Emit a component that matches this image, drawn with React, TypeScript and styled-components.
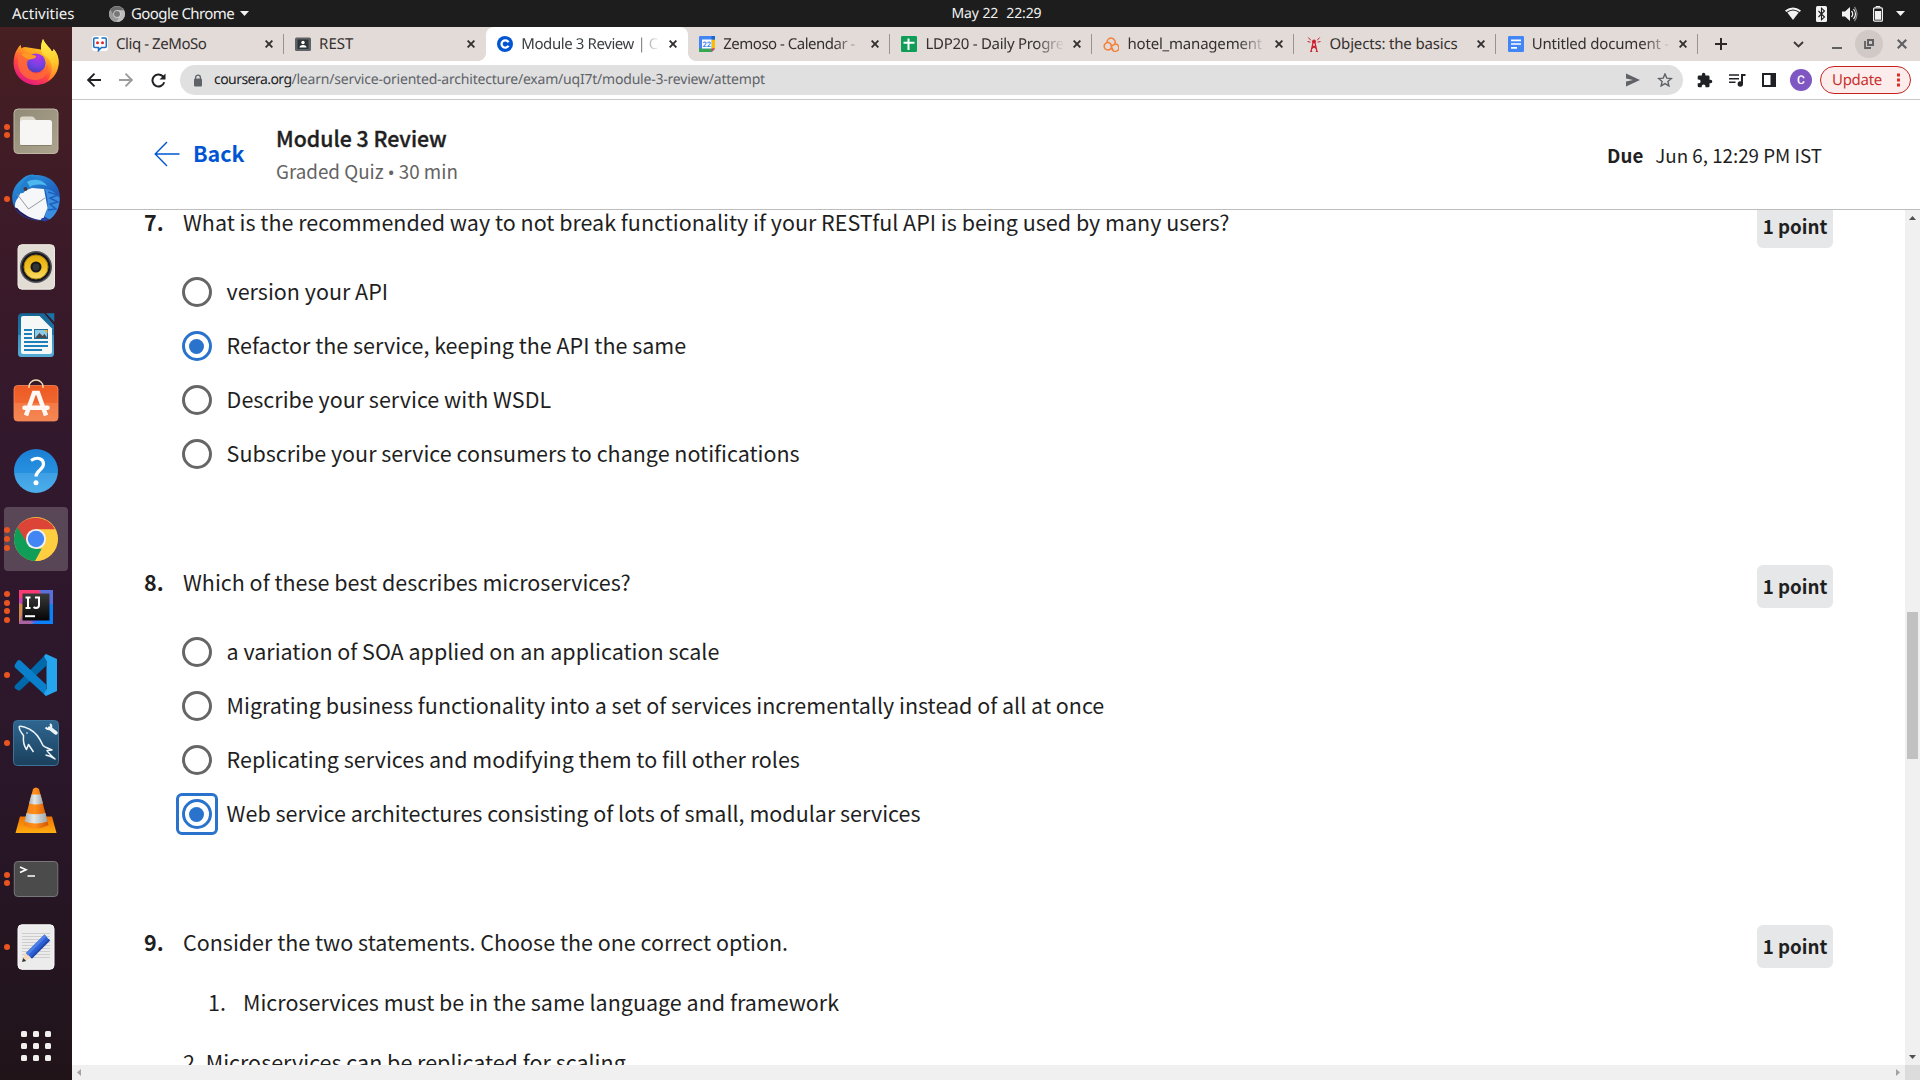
import React from "react";
import styled, { createGlobalStyle, css } from "styled-components";

const uiFont = `"Noto Sans", sans-serif`;
const pageFont = `"Source Sans Pro", "Noto Sans CJK SC", sans-serif`;

const GlobalStyle = createGlobalStyle`
  *, *::before, *::after { box-sizing: border-box; }
  html, body { margin: 0; padding: 0; background: #fff; overflow: hidden; }
  svg { display: block; flex: none; }
`;

const Desktop = styled.div`
  width: 1920px;
  height: 1080px;
  display: flex;
  flex-direction: column;
  overflow: hidden;
  font-family: ${uiFont};
`;

/* ---------- GNOME panel ---------- */

const Panel = styled.header`
  height: 27px;
  flex: none;
  display: grid;
  grid-template-columns: 1fr auto 1fr;
  align-items: center;
  background: #1d1d1d;
  color: #f2f2f2;
  font-size: 15px;
  line-height: 26px;
  white-space: pre;
  text-rendering: geometricPrecision;
`;

const PanelLeft = styled.div`
  display: flex;
  align-items: center;
  padding-left: 12px;
`;

const Activities = styled.span`
  width: 97px;
`;

const AppMenu = styled.span`
  display: flex;
  align-items: center;
  gap: 6px;
  letter-spacing: -0.58px;
`;

const Clock = styled.div`
  display: flex;
  gap: 8px;
  font-size: 14px;
  letter-spacing: -0.1px;
  padding-right: 6px;
  padding-left: 83px;
  margin-left: -4px;
`;

const PanelRight = styled.div`
  display: flex;
  align-items: center;
  justify-content: flex-end;
  gap: 15px;
  padding-right: 15px;
`;

const MenuCaret = styled.span`
  margin-left: -2px;
`;

/* ---------- Dock ---------- */

const Workspace = styled.div`
  flex: 1;
  min-height: 0;
  display: flex;
`;

const Dock = styled.nav`
  width: 72px;
  flex: none;
  display: flex;
  flex-direction: column;
  gap: 4px;
  padding: 4px;
  background: linear-gradient(180deg, #471f22 0%, #3c1a28 20%, #31182d 42%, #2c172b 65%, #261524 82%, #201419 100%);
`;

const DockItem = styled.div<{ $active?: boolean }>`
  position: relative;
  width: 64px;
  height: 64px;
  border-radius: 4px;
  background: ${(p) => (p.$active ? "rgba(255,255,255,0.2)" : "transparent")};
`;

const Dots = styled.div`
  position: absolute;
  left: 0;
  top: 0;
  height: 64px;
  width: 6px;
  display: flex;
  flex-direction: column;
  justify-content: center;
  gap: 2.7px;
`;

const Dot = styled.i`
  width: 6px;
  height: 6px;
  border-radius: 50%;
  background: #e95420;
`;

const AppGrid = styled.div`
  margin-top: auto;
  margin-bottom: 15px;
  align-self: center;
  display: grid;
  grid-template-columns: repeat(3, 6px);
  grid-auto-rows: 6px;
  gap: 6px;
`;

const GridDot = styled.i`
  border-radius: 1.5px;
  background: #f1f0ef;
`;

/* ---------- Browser ---------- */

const Browser = styled.main`
  flex: 1;
  min-width: 0;
  display: flex;
  flex-direction: column;
  background: #fff;
`;

const TabStrip = styled.div`
  height: 34px;
  flex: none;
  display: flex;
  align-items: center;
  background: #e3dbd8;
  padding-left: 10px;
  text-rendering: geometricPrecision;
`;

const Tab = styled.div<{ $active?: boolean; $line?: boolean }>`
  position: relative;
  width: 202.1px;
  height: 34px;
  flex: none;
  display: flex;
  align-items: center;
  padding-left: 11px;
  color: #33302f;
  &:first-child { padding-left: 10px; }
  ${(p) =>
    p.$line &&
    css`
      &::after {
        content: "";
        position: absolute;
        right: 0.6px;
        top: 7px;
        width: 1px;
        height: 20px;
        background: #99928f;
      }
    `}
  ${(p) =>
    p.$active &&
    css`
      color: #3c4043;
      &::before {
        content: "";
        position: absolute;
        inset: 0 0 0 0;
        border-radius: 8px 8px 0 0;
        background: #fff;
      }
    `}
`;

const TabFoot = styled.i<{ $side: "left" | "right" }>`
  position: absolute;
  bottom: 0;
  ${(p) => p.$side}: -8px;
  width: 8px;
  height: 8px;
  background: radial-gradient(circle at ${(p) => (p.$side === "left" ? "0 0" : "100% 0")}, transparent 7.6px, #fff 8.2px);
`;

const TabTitle = styled.span<{ $ls: number; $fade?: boolean }>`
  position: relative;
  width: 142px;
  margin-left: 8px;
  overflow: hidden;
  white-space: nowrap;
  font-size: 15px;
  line-height: 22px;
  letter-spacing: ${(p) => p.$ls}px;
  ${(p) => p.$fade && css`mask-image: linear-gradient(90deg, #000 78%, transparent 98%);`}
`;

const TabIcon = styled.span`
  position: relative;
  width: 16px;
  height: 16px;
`;

const TabClose = styled.span`
  position: relative;
  margin-left: auto;
  margin-right: 11.6px;
`;

const StripControls = styled.div`
  flex: 1;
  display: flex;
  align-items: center;
`;

const ControlSlot = styled.span<{ $w: number; $ml?: number }>`
  width: ${(p) => p.$w}px;
  height: 28px;
  margin-left: ${(p) => p.$ml ?? 0}px;
  display: flex;
  align-items: center;
  justify-content: center;
`;

const RestoreSlot = styled(ControlSlot)`
  border-radius: 50%;
  background: #d1c9c6;
`;

const Toolbar = styled.div`
  height: 39px;
  flex: none;
  display: flex;
  align-items: center;
  border-bottom: 1px solid #c9c9c9;
  padding: 0 8px 0 15px;
  text-rendering: geometricPrecision;
`;

const NavButtons = styled.div`
  display: flex;
  gap: 18px;
  width: 93px;
`;

const Omnibox = styled.div`
  width: 1503px;
  height: 30px;
  display: flex;
  align-items: center;
  border-radius: 15px;
  background: #e0e0e0;
  padding: 0 10px 0 13px;
`;

const Url = styled.span`
  flex: 1;
  margin-left: 11px;
  font-size: 14px;
  line-height: 22px;
  white-space: nowrap;
  color: #5f6368;
  letter-spacing: -0.21px;
`;

const Host = styled.span`
  color: #202124;
  letter-spacing: -0.55px;
`;

const OmniIcons = styled.div`
  display: flex;
  gap: 16px;
`;

const ToolIcons = styled.div`
  display: flex;
  align-items: center;
  gap: 16px;
  margin-left: 14px;
`;

const Avatar = styled.span`
  width: 22px;
  height: 22px;
  margin-left: 14px;
  border-radius: 50%;
  background: #7e57c2;
  color: #fff;
  font: 500 12px/22px Roboto, sans-serif;
  text-align: center;
`;

const UpdateButton = styled.button`
  width: 91px;
  height: 28px;
  margin: 0 0 0 8px;
  padding: 0 10px 0 11px;
  display: flex;
  align-items: center;
  justify-content: space-between;
  border: 1px solid #c5221f;
  border-radius: 14px;
  background: #fcedec;
  color: #c9302c;
  font-family: ${uiFont};
  font-size: 15px;
  letter-spacing: -0.3px;
  text-rendering: geometricPrecision;
`;

const QuizHeader = styled.section`
  height: 110px;
  flex: none;
  display: flex;
  align-items: center;
  border-bottom: 1px solid #bdbdbd;
  padding: 0 98px 0 82px;
  font-family: ${pageFont};
  color: #1f1f1f;
`;

const BackLink = styled.a`
  width: 122px;
  display: flex;
  align-items: center;
  gap: 13px;
  padding-bottom: 2px;
  color: #0056d2;
  font-size: 21.48px;
  line-height: 30px;
  font-weight: 700;
`;

const BackText = styled.span`
  padding-bottom: 1px;
`;

const QuizTitles = styled.div`
  flex: 1;
  padding-bottom: 1px;
`;

const QuizTitle = styled.h1`
  margin: 0;
  font-size: 21.3px;
  line-height: 33px;
  font-weight: 500;
  -webkit-text-stroke: 0.35px #1f1f1f;
`;

const QuizMeta = styled.p`
  margin: 0;
  font-size: 18.8px;
  line-height: 33px;
  color: #636363;
`;

const Bullet = styled.span`
  font-family: "Noto Sans", sans-serif;
  font-size: 18px;
  line-height: 1;
`;

const DueDate = styled.div`
  display: flex;
  gap: 12px;
  font-size: 18.75px;
  line-height: 32px;
  padding-top: 1px;
`;

const Viewport = styled.section`
  flex: 1;
  min-height: 0;
  display: grid;
  grid-template-columns: 1fr 15px;
  grid-template-rows: 1fr 15px;
`;

const QuizScroll = styled.div`
  overflow: hidden;
  padding: 0 72px;
  font-family: ${pageFont};
  font-size: 21.49px;
  line-height: 34px;
  color: #1f1f1f;
`;

const Question = styled.article`
  height: 360px;
  display: flex;
  align-items: flex-start;
  &:first-child { margin-top: -5px; }
`;

const QuestionNumber = styled.b`
  width: 39px;
`;

const QuestionBody = styled.div`
  flex: 1;
`;

const Prompt = styled.div`
  margin-bottom: 26px;
`;

const Option = styled.label`
  height: 54px;
  display: flex;
  align-items: center;
`;

const OptionText = styled.span`
  padding-bottom: 2px;
`;

const Radio = styled.span<{ $checked?: boolean; $focus?: boolean }>`
  width: 30px;
  height: 30px;
  margin: 0 15px 0 -1.4px;
  display: grid;
  place-items: center;
  border-radius: 50%;
  border: 3px solid ${(p) => (p.$checked ? "#2a73cc" : "#666")};
  position: relative;
  ${(p) =>
    p.$checked &&
    css`
      &::before {
        content: "";
        width: 15px;
        height: 15px;
        border-radius: 50%;
        background: #2a73cc;
      }
    `}
  ${(p) =>
    p.$focus &&
    css`
      &::after {
        content: "";
        position: absolute;
        inset: -9px;
        border: 3px solid #2a73cc;
        border-radius: 6px;
      }
    `}
`;

const Points = styled.span`
  width: 76px;
  height: 43px;
  border-radius: 6px;
  background: #e5e7e8;
  font-size: 18.75px;
  font-weight: 700;
  line-height: 42px;
  text-align: center;
`;

const Statements = styled.ol`
  margin: 0;
  padding-left: 25px;
  list-style: none;
`;

const Statement = styled.li`
  display: flex;
`;

const StatementMark = styled.span`
  width: 35px;
`;

const StatementText = styled.p`
  margin: 26px 0 0;
`;

const VScroll = styled.div`
  display: flex;
  flex-direction: column;
  align-items: center;
  justify-content: space-between;
  background: #f0f0f0;
  padding: 6px 0;
`;

const Thumb = styled.div`
  width: 11px;
  height: 147px;
  margin-top: 96px;
  background: #c1c1c1;
`;

const HScroll = styled.div`
  display: flex;
  align-items: center;
  justify-content: space-between;
  padding: 0 5px;
  background: #f0f0f0;
`;

const Corner = styled.div`
  background: #dcdcdc;
`;

/* ---------- Dock icons (64 x 64 grid) ---------- */

const Icon64 = ({ children }: { children: React.ReactNode }) => (
  <svg width="64" height="64" viewBox="0 0 64 64">{children}</svg>
);

const Firefox = () => (
  <Icon64>
    <defs>
      <linearGradient id="ffBody" x1="0.8" y1="0.1" x2="0.3" y2="1">
        <stop offset="0" stopColor="#ffe62e" /><stop offset="0.35" stopColor="#ffa51f" />
        <stop offset="0.65" stopColor="#ff4a3c" /><stop offset="1" stopColor="#e31587" />
      </linearGradient>
      <linearGradient id="ffTail" x1="0.5" y1="0" x2="0.5" y2="1">
        <stop offset="0" stopColor="#fff44f" /><stop offset="0.55" stopColor="#ffc82c" /><stop offset="1" stopColor="#ff7a2a" />
      </linearGradient>
      <radialGradient id="ffGlobe" cx="0.6" cy="0.2" r="0.9">
        <stop offset="0" stopColor="#b833e1" /><stop offset="0.5" stopColor="#7542e5" /><stop offset="1" stopColor="#4a3bb5" />
      </radialGradient>
    </defs>
    <path d="M14 17c.6-1.300 1.600-2.400 3-3.200-.2 1.500 0 2.500.5 3.600 1-.8 2-1.200 3.500-1.400L37 18.500C36.800 14 38 10.500 39 8c2 5 6.500 8 9 12.500 1.300-.5 1.500-1.500 1.500-2.500C53.500 22 55 27 54.600 32.500 54 45 44 54 32 54S9.600 44.500 9.600 32c0-6 1.400-11 4.400-15z" fill="url(#ffBody)" />
    <path d="M39 8c2 5 6.500 8 9 12.500 1.300-.5 1.500-1.500 1.500-2.500C53 22 55 27 54.500 33c-.6 8-5.500 14-11 17 3-5 5.500-12 3.500-18-2-6.500-10.500-6.500-10-15 .1-3.700 1.100-6.700 2-9z" fill="url(#ffTail)" />
    <circle cx="32" cy="32" r="9.600" fill="url(#ffGlobe)" />
    <path d="M14 24c3-2 6.500-2.600 9.500-1.600 2 1.200 5 1.400 8.500 2.600.3 2.200-3 3-6.500 3.600-1.800.6-2.300 2.400-2.300 4.400 0 5 4 9.500 9.500 9.500 6 0 10-4 10.400-9.500C46 41 41 48.500 32 49c-9.500.3-16-6-17.500-13-.8-4-.9-8-.5-12z" fill="#ff6a3a" opacity="0.8" />
    <path d="M17 23.500c3-2 5-1.800 7-1 2 1.200 5 1.400 8 2.500.3 2.200-4 3-7 3.600-2-.4-5-2.500-8-5.100z" fill="#ff9a22" />
  </Icon64>
);

const Files = () => (
  <Icon64>
    <defs><linearGradient id="fileBg" x1="0" y1="0" x2="1" y2="1"><stop offset="0" stopColor="#918a76" /><stop offset="1" stopColor="#aca48e" /></linearGradient></defs>
    <rect x="10" y="10" width="44" height="44.500" rx="4" fill="url(#fileBg)" stroke="#bcb6a4" />
    <path d="M16 20a2.500 2.500 0 0 1 2.500-2.500H28q1.500 0 2.500 1.500l1.500 2v6H16z" fill="#dcd8cb" />
    <rect x="16" y="21" width="32" height="25.500" rx="2.500" fill="#f7f6f4" />
    <path d="M17 46.500h30" stroke="#857e6b" strokeWidth="1" />
  </Icon64>
);

const Thunderbird = () => (
  <Icon64>
    <defs><linearGradient id="tb" x1="0.2" y1="0" x2="0.8" y2="1"><stop offset="0" stopColor="#2a97dc" /><stop offset="0.5" stopColor="#2067c4" /><stop offset="1" stopColor="#273a9a" /></linearGradient></defs>
    <path d="M17 13c3-3.500 7-5 11-5.400 1.500-.4 2-.2 2 .4C45 7 56 17 56 31c0 12-6 20-15 23.500l-3.500-1C20 54 8.500 44 8.200 31c0-7 3-13.500 8.800-18z" fill="url(#tb)" />
    <path d="M41 22c6 0 11 4 14.500 9 0 10-3.500 17-10 21.500l-5-3c4-8 4-19 .5-27.500z" fill="#3a8fe0" />
    <path d="M44 25l10 3-8 3 8 4-8 2 6 5-8 1" fill="none" stroke="#1f60bd" strokeWidth="1.500" />
    <path d="M17 25l11-4 12 1 3.500 19-4 10c-10 1.500-21-3-28.500-10-.5-5 1-8 3-10z" fill="#f5f7f9" />
    <path d="M13 27l11.500 15L41 31" fill="none" stroke="#8b9096" strokeWidth="0.900" />
    <path d="M10 40c8 3 20 8 29 11.500-9 3-22-.5-29-11.500z" fill="#251a5e" />
    <path d="M13.500 38c6 6 15 9 26 11l-3 4c-8-1-17-5-22.500-11z" fill="#f5f7f9" />
    <path d="M16 26c0-7 3-13 10-17 6 0 10 4 11 9-7-1-12 1-16 6-1 2-3 2.500-5 2z" fill="#237fcd" />
    <path d="M23 15c6-4 16-3 20 4-6-2-13-2-17 1z" fill="#4db8ee" />
    <circle cx="21.500" cy="22" r="2" fill="#48363b" />
  </Icon64>
);

const Rhythmbox = () => (
  <Icon64>
    <defs><linearGradient id="rb" x1="0" y1="0" x2="0" y2="1"><stop offset="0" stopColor="#e3ab0c" /><stop offset="0.500" stopColor="#f0c020" /><stop offset="1" stopColor="#f9dc6c" /></linearGradient></defs>
    <rect x="14" y="9.700" width="36.500" height="44.500" rx="4" fill="#e2ddd4" stroke="#efebe4" />
    <circle cx="32" cy="32" r="16" fill="#54535a" />
    <circle cx="32" cy="32" r="14.500" fill="#17181f" />
    <circle cx="32" cy="32" r="12" fill="url(#rb)" stroke="#aa8410" />
    <circle cx="32" cy="32" r="5.500" fill="#16171b" />
    <circle cx="32" cy="32" r="3.500" fill="#333434" />
  </Icon64>
);

const Writer = () => (
  <Icon64>
    <defs><linearGradient id="lo" x1="0" y1="0" x2="0" y2="1"><stop offset="0" stopColor="#166795" /><stop offset="0.500" stopColor="#1a78ad" /><stop offset="0.501" stopColor="#3792c2" /><stop offset="1" stopColor="#55acd6" /></linearGradient></defs>
    <path d="M18 10.300h22L50 22v28.500a3.500 3.500 0 0 1-3.500 3.500h-29a3.500 3.500 0 0 1-3.500-3.500v-36.500a3.700 3.700 0 0 1 4-3.700z" fill="url(#lo)" />
    <path d="M42 10.300h8.300v8.700z" fill="#1674a8" />
    <path d="M19 13h16.500L48 25.500V48.500a2.500 2.500 0 0 1-2.500 2.500h-26.500a2 2 0 0 1-2-2V15a2 2 0 0 1 2-2z" fill="#f6f8f8" />
    <path d="M20 27h8M20 31h8M20 35h8M20 39h24M20 43h24M20 47h18" stroke="#1d80b9" strokeWidth="1.800" />
    <rect x="30.500" y="26.500" width="13" height="9" fill="#8ec9e8" stroke="#1e6d98" />
    <path d="M31 35l4.500-5 3 3 2-2 3 4z" fill="#47494b" /><path d="M40 27h3.500v3.500z" fill="#f0b52f" />
  </Icon64>
);

const Software = () => (
  <Icon64>
    <defs><linearGradient id="sw" x1="0" y1="0" x2="0" y2="1"><stop offset="0" stopColor="#ee5922" /><stop offset="0.480" stopColor="#f0662f" /><stop offset="0.490" stopColor="#f37a47" /><stop offset="1" stopColor="#f48752" /></linearGradient></defs>
    <rect x="10" y="14.500" width="44" height="35.500" rx="3.500" fill="url(#sw)" stroke="#f58b5b" strokeWidth="0.800" />
    <path d="M25 17v-1.500a7 6.500 0 0 1 14 0V17" fill="none" stroke="#f3dfb5" strokeWidth="1.400" />
    <path d="M22 44.500L30 22h4l8 22.500" fill="none" stroke="#fff8f4" strokeWidth="4.500" />
    <path d="M20.500 36.700h23" stroke="#fff8f4" strokeWidth="4.500" strokeLinecap="round" />
  </Icon64>
);

const Help = () => (
  <Icon64>
    <defs><linearGradient id="hp" x1="0" y1="0" x2="0" y2="1"><stop offset="0" stopColor="#1b7fd3" /><stop offset="0.540" stopColor="#2791e0" /><stop offset="0.550" stopColor="#3d9fe4" /><stop offset="1" stopColor="#4eaeea" /></linearGradient></defs>
    <circle cx="32" cy="32" r="22" fill="url(#hp)" />
    <path d="M27 21.500c7-4.500 12.500-1.500 12.500 3.500 0 6-7.500 6.500-7.500 12.500" fill="none" stroke="#fff" strokeWidth="3.200" />
    <circle cx="32" cy="43.800" r="2.500" fill="#fff" />
  </Icon64>
);

const ChromeLogo = ({ size, mono }: { size: number; mono?: boolean }) => (
  <svg width={size} height={size} viewBox="0 0 48 48">
    <circle cx="24" cy="24" r="24" fill={mono ? "#c8c8c8" : "#ffcd40"} />
    <path d="M3.200 12A24 24 0 0 1 44.800 13.500H24L14.900 29.200z" fill={mono ? "#6d6d6d" : "#db4437"} />
    <path d="M3.700 11.200L14.900 29.200 24 34.500h8.500L23 48A24 24 0 0 1 3.700 11.200z" fill={mono ? "#9a9a9a" : "#0f9d58"} />
    <path d="M24 13.500h21A24 24 0 0 1 23 48L33.100 29.200z" fill={mono ? "#bdbdbd" : "#ffcd40"} />
    <circle cx="24" cy="24" r="11" fill={mono ? "#d9d9d9" : "#f1f1f1"} />
    <circle cx="24" cy="24" r="8.900" fill={mono ? "#777" : "#4285f4"} />
  </svg>
);

const ChromeSlot = styled.span`
  width: 64px;
  height: 64px;
  display: grid;
  place-items: center;
`;

const Idea = () => (
  <Icon64>
    <defs>
      <linearGradient id="ijA" x1="0" y1="0" x2="1" y2="1"><stop offset="0" stopColor="#ff318c" /><stop offset="0.500" stopColor="#6b57ff" /><stop offset="1" stopColor="#087cfa" /></linearGradient>
      <linearGradient id="ijB" x1="0" y1="0" x2="0" y2="1"><stop offset="0" stopColor="#3a3a3a" /><stop offset="1" stopColor="#050505" /></linearGradient>
    </defs>
    <rect x="15" y="15" width="34" height="34" fill="url(#ijA)" />
    <path d="M15 15h20l5 8H15z" fill="#fb3b74" /><path d="M35 15h14v16l-9-8z" fill="#5b6fdc" />
    <path d="M15 28l5 2-3 16-2 2z" fill="#cd8a4b" /><path d="M15 48l3-8 14 9H15z" fill="#a964a0" />
    <path d="M45 28l4 2v19H27l10-4z" fill="#0c80fa" />
    <rect x="18.500" y="18.500" width="27" height="27" fill="url(#ijB)" />
    <path d="M21.500 22.600h5M21.500 33h5M24 22.600V33M31 22.600h4V30q0 3-3 3-1.500 0-2.500-1" fill="none" stroke="#fff" strokeWidth="2" />
    <path d="M21 41.200h10" stroke="#fff" strokeWidth="2" />
  </Icon64>
);

const Code = () => (
  <Icon64>
    <path d="M11 45.500q-1-1.500 0-3L42 11v12L16.500 47q-1.500 1-3 0z" fill="#0069ab" />
    <path d="M11 21.500q-1 1.500 0 3L42 53V41.500L16.500 17.500q-1.500-1-3 0z" fill="#0a80cc" />
    <path d="M42 11l11 5v32l-11 5-2-2 2.500-5V18L40 13z" fill="#24a5ee" />
  </Icon64>
);

const Workbench = () => (
  <Icon64>
    <defs><linearGradient id="wb" x1="0" y1="0" x2="0" y2="1"><stop offset="0" stopColor="#2e6690" /><stop offset="1" stopColor="#1b405c" /></linearGradient></defs>
    <rect x="9.500" y="9.500" width="45" height="45" rx="4" fill="url(#wb)" stroke="#3b739b" />
    <path d="M15 15.500c4-1 8 1.500 11 3 6 3 10 9 13 16 2 2 5 2.500 9 4.500l-5 .5c1.500 3 4 5 8 8.500-3-2-6-3.500-9.500-4M15 15.500c0 4 2.500 6 4.500 9-.5 6 0 10 3 14l2-5 5 7.500" fill="none" stroke="#eef5fa" strokeWidth="1.500" strokeLinejoin="round" />
    <circle cx="23" cy="22" r="0.800" fill="#fff" />
    <path d="M45.500 17l6.500 5" fill="none" stroke="#eef5fa" strokeWidth="3.500" strokeLinecap="round" />
    <path d="M41.500 16.500q3 3 5.500.5 1-2.500-1-4" fill="none" stroke="#eef5fa" strokeWidth="2" />
  </Icon64>
);

const Vlc = () => (
  <Icon64>
    <defs>
      <linearGradient id="vlA" x1="0" y1="0" x2="0" y2="1"><stop offset="0" stopColor="#ef7100" /><stop offset="1" stopColor="#ffae12" /></linearGradient>
      <linearGradient id="vlB" x1="0" y1="0" x2="1" y2="0"><stop offset="0" stopColor="#f07c10" /><stop offset="0.450" stopColor="#ff8f1c" /><stop offset="1" stopColor="#d25400" /></linearGradient>
      <linearGradient id="vlC" x1="0" y1="0" x2="1" y2="0"><stop offset="0" stopColor="#a9b0b3" /><stop offset="0.400" stopColor="#e3e8ea" /><stop offset="1" stopColor="#9fa6a8" /></linearGradient>
    </defs>
    <path d="M16 37.500h32l4.500 16.500h-41z" fill="url(#vlA)" />
    <path d="M29 10q3-3 6 0l9.500 36q-12.500 7-25 0z" fill="url(#vlB)" />
    <path d="M27.500 15.500h9l2.500 9q-7 2-14 0z" fill="url(#vlC)" />
    <path d="M22.500 34q9.500 2.500 19 0l2 8.500q-11.500 4-23 0z" fill="url(#vlC)" />
  </Icon64>
);

const Terminal = () => (
  <Icon64>
    <rect x="10.300" y="14.500" width="43.500" height="35" rx="3.500" fill="#4b4b4b" stroke="#777" strokeWidth="1" />
    <path d="M16 20l6 2.800-6 2.800M23.500 29h7.500" fill="none" stroke="#fff" strokeWidth="1.700" />
  </Icon64>
);

const TextEditor = () => (
  <Icon64>
    <rect x="14" y="9.800" width="36" height="44.500" rx="4" fill="#ececec" stroke="#fafafa" />
    <path d="M18 18.500h28M18 21.500h28M18 24.500h28M18 27.500h28M18 30.500h28M18 33.500h28M18 36.500h28M18 39.500h28M18 42.500h28" stroke="#cdcdcd" />
    <path d="M18 47l3-10 6 6z" fill="#f6d9bd" />
    <path d="M18 47l1.200-4 3 3z" fill="#333" />
    <path d="M22 38L40.500 19.500l5.500 6L28 43.500z" fill="#2c5fd6" />
    <path d="M22 38L40.500 19.500l2 2L24 40.500z" fill="#4a7fe8" /><path d="M26.500 42.500L44.500 24l1.500 1.500L28 43.500z" fill="#2048a8" />
  </Icon64>
);

const dockApps: { icon: React.ReactNode; dots: number; active?: boolean }[] = [
  { icon: <Firefox />, dots: 0 },
  { icon: <Files />, dots: 2 },
  { icon: <Thunderbird />, dots: 1 },
  { icon: <Rhythmbox />, dots: 0 },
  { icon: <Writer />, dots: 0 },
  { icon: <Software />, dots: 0 },
  { icon: <Help />, dots: 0 },
  { icon: <ChromeSlot><ChromeLogo size={44} /></ChromeSlot>, dots: 3, active: true },
  { icon: <Idea />, dots: 4 },
  { icon: <Code />, dots: 1 },
  { icon: <Workbench />, dots: 1 },
  { icon: <Vlc />, dots: 0 },
  { icon: <Terminal />, dots: 2 },
  { icon: <TextEditor />, dots: 1 },
];

/* ---------- Favicons ---------- */

const Fav = ({ children }: { children: React.ReactNode }) => (
  <svg width="16" height="16" viewBox="0 0 16 16">{children}</svg>
);

const CliqIcon = () => (
  <Fav>
    <rect x="0" y="0" width="16" height="15" rx="3" fill="#fff" />
    <path d="M6.500 2H3Q1.700 2 1.700 3.300v6.900Q1.700 11.500 3 11.500h3.500v3l3-3H13q1.300 0 1.300-1.300V3.300Q14.300 2 13 2H9.500" fill="none" stroke="#1f6fc0" strokeWidth="1.600" />
    <circle cx="5.500" cy="6.700" r="1.500" fill="#e42527" /><circle cx="10.500" cy="6.700" r="1.500" fill="#e42527" />
  </Fav>
);
const ClassroomIcon = () => (
  <Fav>
    <rect x="0" y="1.500" width="16" height="13.500" rx="1.500" fill="#5f6368" /><rect x="2.500" y="3.500" width="11" height="9.500" fill="#2f3438" />
    <circle cx="8" cy="6.500" r="1.700" fill="#fff" /><path d="M4.500 11.500q0-2.500 3.500-2.500t3.500 2.500z" fill="#fff" />
  </Fav>
);
const CourseraIcon = () => (
  <Fav>
    <circle cx="8" cy="8" r="8" fill="#0056d2" />
    <path d="M11.500 6.200A3.700 3.700 0 1 0 11.500 9.800" fill="none" stroke="#fff" strokeWidth="2.300" />
  </Fav>
);
const CalendarIcon = () => (
  <Fav>
    <rect x="0" y="0" width="16" height="16" rx="1.200" fill="#4285f4" /><rect x="12.500" y="3.500" width="3.500" height="9" fill="#fbbc04" />
    <rect x="0" y="12.500" width="12.500" height="3.500" fill="#34a853" /><path d="M12.500 12.500H16L12.500 16z" fill="#ea4335" /><path d="M13 16l3-3v3z" fill="#e3dbd8" />
    <rect x="12.500" y="0" width="3.500" height="3.500" fill="#1967d2" /><rect x="3" y="3.500" width="9.500" height="9" fill="#fff" />
    <text x="7.800" y="10.700" fontSize="7.500" fontWeight="700" textAnchor="middle" fill="#4285f4" fontFamily="Roboto, sans-serif">22</text>
  </Fav>
);
const SheetsIcon = () => (
  <Fav><rect width="16" height="16" rx="1.300" fill="#0f9d58" /><path d="M7.500 2.500v11.500M2.500 6.700h11" stroke="#fff" strokeWidth="2" /></Fav>
);
const PostmanCloudIcon = () => (
  <Fav>
    <g fill="none" stroke="#f4803c" strokeWidth="1.500" strokeLinecap="round">
      <path d="M4 6.200a4.100 4.100 0 1 1 7.800 1.800A3.700 3.700 0 1 1 9 13.500" />
      <path d="M8.500 9.800a3.700 3.700 0 1 1-3-3.200q2.500.6 3 3.200 0 2.500 1.500 4" />
      <path d="M11.800 8q-1.500 2-4 1.200" />
    </g>
  </Fav>
);
const TowerIcon = () => (
  <Fav>
    <g fill="none" stroke="#c8202f" strokeWidth="1.200">
      <path d="M7.300 5.500L5 15.500M8.700 5.500L11 15.500M5.800 12.500l4-3M10.200 12.500l-4-3" />
      <path d="M4.800 4.300L2.300 1.500M11.200 4.300l2.500-2.800M4.500 6.200L1.500 5.500M11.500 6.200l3-.7M4.200 15.500h2M9.800 15.500h2" strokeWidth="1" />
    </g>
    <circle cx="8" cy="5.500" r="1.900" fill="#c8202f" />
  </Fav>
);
const DocsIcon = () => (
  <Fav><rect width="16" height="16" rx="1.300" fill="#4285f4" /><path d="M3 4.300h10M3 8h10M3 11.800h6" stroke="#fff" strokeWidth="1.700" /></Fav>
);

const tabs: { icon: React.ReactNode; title: string; ls: number; fade?: boolean; active?: boolean; line?: boolean }[] = [
  { icon: <CliqIcon />, title: "Cliq - ZeMoSo", ls: -0.43, line: true },
  { icon: <ClassroomIcon />, title: "REST", ls: 0 },
  { icon: <CourseraIcon />, title: "Module 3 Review | Co", ls: -0.4, fade: true, active: true },
  { icon: <CalendarIcon />, title: "Zemoso - Calendar - ", ls: -0.5, fade: true, line: true },
  { icon: <SheetsIcon />, title: "LDP20 - Daily Progre", ls: -0.27, fade: true, line: true },
  { icon: <PostmanCloudIcon />, title: "hotel_management", ls: -0.2, fade: true, line: true },
  { icon: <TowerIcon />, title: "Objects: the basics", ls: -0.17, line: true },
  { icon: <DocsIcon />, title: "Untitled document -", ls: -0.19, fade: true, line: true },
];

const Close = ({ color = "#33302f", size = 8, w = 1.9 }: { color?: string; size?: number; w?: number }) => (
  <svg width={size} height={size} viewBox="0 0 8 8"><path d="M.6.6l6.800 6.800M7.400.6L.6 7.400" stroke={color} strokeWidth={w} /></svg>
);

const Arrow = ({ color, flip }: { color: string; flip?: boolean }) => (
  <svg width="14" height="14" viewBox="0 0 14 14">
    <path d={flip ? "M0 7h13M6.500.7L12.800 7l-6.300 6.300" : "M14 7H1.500M7.500.7L1.200 7l6.300 6.300"} fill="none" stroke={color} strokeWidth="1.900" />
  </svg>
);

const Caret = () => (
  <svg width="9" height="5" viewBox="0 0 9 5"><path d="M0 0h9L4.500 5z" fill="#f2f2f2" /></svg>
);

type OptionData = { text: string; checked?: boolean; focus?: boolean };
const questions: { n: number; prompt: string; options: OptionData[] }[] = [
  {
    n: 7,
    prompt: "What is the recommended way to not break functionality if your RESTful API is being used by many users?",
    options: [
      { text: "version your API" },
      { text: "Refactor the service, keeping the API the same", checked: true },
      { text: "Describe your service with WSDL" },
      { text: "Subscribe your service consumers to change notifications" },
    ],
  },
  {
    n: 8,
    prompt: "Which of these best describes microservices?",
    options: [
      { text: "a variation of SOA applied on an application scale" },
      { text: "Migrating business functionality into a set of services incrementally instead of all at once" },
      { text: "Replicating services and modifying them to fill other roles" },
      { text: "Web service architectures consisting of lots of small, modular services", checked: true, focus: true },
    ],
  },
];

export default function App() {
  return (
    <Desktop>
      <GlobalStyle />
      <Panel>
        <PanelLeft>
          <Activities>Activities</Activities>
          <AppMenu><ChromeLogo size={16} mono />Google Chrome<Caret /></AppMenu>
        </PanelLeft>
        <Clock><span>May 22</span><span>22:29</span></Clock>
        <PanelRight>
          <svg width="16" height="13" viewBox="0 0 16 13">
            <path d="M0 3.500Q8-2.500 16 3.500L14.800 5Q8 0 1.200 5z" fill="#f2f2f2" /><path d="M2.300 5.500Q8 1.500 13.700 5.500L8 13z" fill="#f2f2f2" />
          </svg>
          <svg width="11" height="16" viewBox="0 0 11 16">
            <rect width="11" height="16" rx="1.500" fill="#f2f2f2" />
            <path d="M2.500 5l6 6-3 2.800V2.200l3 2.800-6 6" fill="none" stroke="#1d1d1d" strokeWidth="1.100" />
          </svg>
          <svg width="16" height="16" viewBox="0 0 16 16">
            <path d="M0 5.500h3L8 1v14l-5-4.500H0z" fill="#f2f2f2" />
            <path d="M9.500 5q2.500 3 0 6M11.500 3q4 5 0 10" fill="none" stroke="#f2f2f2" strokeWidth="1.200" />
            <path d="M12.500.8q5 7.200 0 14.400" fill="none" stroke="#8a8a8a" strokeWidth="1.200" />
          </svg>
          <svg width="10" height="16" viewBox="0 0 10 16">
            <path d="M3 1.500V.5h4v1" stroke="#f2f2f2" fill="none" /><rect x="0.600" y="1.900" width="8.800" height="13.300" rx="1" fill="none" stroke="#f2f2f2" strokeWidth="1.200" />
            <rect x="2" y="5" width="6" height="8.700" fill="#f2f2f2" />
          </svg>
          <MenuCaret><Caret /></MenuCaret>
        </PanelRight>
      </Panel>

      <Workspace>
        <Dock>
          {dockApps.map((app, i) => (
            <DockItem key={i} $active={app.active}>
              {app.icon}
              <Dots>{Array.from({ length: app.dots }, (_, d) => <Dot key={d} />)}</Dots>
            </DockItem>
          ))}
          <AppGrid>{Array.from({ length: 9 }, (_, i) => <GridDot key={i} />)}</AppGrid>
        </Dock>

        <Browser>
          <TabStrip>
            {tabs.map((t) => (
              <Tab key={t.title} $active={t.active} $line={t.line}>
                {t.active && <><TabFoot $side="left" /><TabFoot $side="right" /></>}
                <TabIcon>{t.icon}</TabIcon>
                <TabTitle $ls={t.ls} $fade={t.fade}>{t.title}</TabTitle>
                <TabClose><Close /></TabClose>
              </Tab>
            ))}
            <StripControls>
              <ControlSlot $w={12} $ml={16}>
                <svg width="12" height="12" viewBox="0 0 12 12"><path d="M6 0v12M0 6h12" stroke="#2b2827" strokeWidth="2" /></svg>
              </ControlSlot>
              <ControlSlot $w={12} $ml={66}>
                <svg width="11" height="7" viewBox="0 0 11 7"><path d="M1 1l4.500 4.500L10 1" fill="none" stroke="#3b3837" strokeWidth="1.900" /></svg>
              </ControlSlot>
              <ControlSlot $w={10} $ml={27}>
                <svg width="10" height="10" viewBox="0 0 10 10"><path d="M0 9h10" stroke="#5f6062" strokeWidth="2" /></svg>
              </ControlSlot>
              <RestoreSlot $w={28} $ml={13}>
                <svg width="10" height="10" viewBox="0 0 10 10">
                  <path d="M4 1h5v5H4z" fill="none" stroke="#5f6062" strokeWidth="2" /><path d="M1 2v7h6" fill="none" stroke="#5f6062" strokeWidth="1.800" />
                </svg>
              </RestoreSlot>
              <ControlSlot $w={10} $ml={14}><Close color="#5f6062" size={10} w={1.7} /></ControlSlot>
            </StripControls>
          </TabStrip>

          <Toolbar>
            <NavButtons>
              <Arrow color="#202124" />
              <Arrow color="#9c9c9c" flip />
              <svg width="15" height="15" viewBox="0 0 15 15">
                <path d="M13.200 9.300A6 6 0 1 1 11.800 3.300L13.300 4.900" fill="none" stroke="#202124" strokeWidth="2" /><path d="M14.500.5v6h-6z" fill="#202124" />
              </svg>
            </NavButtons>
            <Omnibox>
              <svg width="10" height="13" viewBox="0 0 10 13">
                <rect x="1" y="4.500" width="8" height="8" rx="1" fill="#5f6368" /><path d="M2.600 5V3.500a2.400 2.400 0 0 1 4.800 0V5" fill="none" stroke="#5f6368" strokeWidth="1.300" />
              </svg>
              <Url><Host>coursera.org</Host>/learn/service-oriented-architecture/exam/uqI7t/module-3-review/attempt</Url>
              <OmniIcons>
                <svg width="16" height="14" viewBox="0 0 16 14"><path d="M1 .5L15 7 1 13.500V8.500L8 7 1 5.500z" fill="#5f6368" /></svg>
                <svg width="16" height="14" viewBox="1 1.500 16 15">
                  <path d="M9 2.500l1.900 4.500 4.900.4-3.700 3.200 1.100 4.800L9 12.900l-4.200 2.500 1.100-4.800-3.700-3.200 4.900-.4z" fill="none" stroke="#5f6368" strokeWidth="1.500" />
                </svg>
              </OmniIcons>
            </Omnibox>
            <ToolIcons>
              <svg width="16" height="16" viewBox="1 0 23 23">
                <path d="M20.500 11H19V7a2 2 0 0 0-2-2h-4V3.500a2.500 2.500 0 0 0-5 0V5H4a2 2 0 0 0-2 2v3.800h1.500a2.700 2.700 0 0 1 0 5.400H2V20a2 2 0 0 0 2 2h3.800v-1.500a2.700 2.700 0 0 1 5.400 0V22H17a2 2 0 0 0 2-2v-4h1.500a2.500 2.500 0 0 0 0-5z" fill="#202124" />
              </svg>
              <svg width="17" height="14" viewBox="0 0 17 14">
                <path d="M0 2h10M0 5.700h10M0 9.300h6.500" stroke="#202124" strokeWidth="1.500" /><path d="M13 11V2h3.500" fill="none" stroke="#202124" strokeWidth="2" /><circle cx="11.300" cy="11" r="2.700" fill="#202124" />
              </svg>
              <svg width="14" height="14" viewBox="0 0 14 14"><rect x="1" y="1" width="12" height="12" fill="#fff" stroke="#202124" strokeWidth="2" /><rect x="8.500" y="1" width="5" height="12" fill="#202124" /></svg>
            </ToolIcons>
            <Avatar>C</Avatar>
            <UpdateButton>
              Update
              <svg width="3" height="14" viewBox="0 0 3 14"><path d="M0 .5h3v3H0zM0 5.500h3v3H0zM0 10.500h3v3H0z" fill="#d93025" /></svg>
            </UpdateButton>
          </Toolbar>

          <QuizHeader>
            <BackLink>
              <svg width="26" height="26" viewBox="0 0 26 26"><path d="M25.500 13H1.200M13 1L1.200 13 13 25" fill="none" stroke="#0056d2" strokeWidth="1.400" /></svg>
              <BackText>Back</BackText>
            </BackLink>
            <QuizTitles>
              <QuizTitle>Module 3 Review</QuizTitle>
              <QuizMeta>Graded Quiz <Bullet>•</Bullet> 30 min</QuizMeta>
            </QuizTitles>
            <DueDate><b>Due</b><span>Jun 6, 12:29 PM IST</span></DueDate>
          </QuizHeader>

          <Viewport>
            <QuizScroll>
              {questions.map((q) => (
                <Question key={q.n}>
                  <QuestionNumber>{q.n}.</QuestionNumber>
                  <QuestionBody>
                    <Prompt>{q.prompt}</Prompt>
                    {q.options.map((o) => (
                      <Option key={o.text}>
                        <Radio $checked={o.checked} $focus={o.focus} />
                        <OptionText>{o.text}</OptionText>
                      </Option>
                    ))}
                  </QuestionBody>
                  <Points>1 point</Points>
                </Question>
              ))}
              <Question>
                <QuestionNumber>9.</QuestionNumber>
                <QuestionBody>
                  <Prompt>Consider the two statements. Choose the one correct option.</Prompt>
                  <Statements>
                    <Statement><StatementMark>1.</StatementMark>Microservices must be in the same language and framework</Statement>
                  </Statements>
                  <StatementText>2. Microservices can be replicated for scaling</StatementText>
                </QuestionBody>
                <Points>1 point</Points>
              </Question>
            </QuizScroll>
            <VScroll>
              <svg width="7" height="4" viewBox="0 0 7 4"><path d="M0 4h7L3.500 0z" fill="#505050" /></svg>
              <Thumb />
              <svg width="7" height="4" viewBox="0 0 7 4"><path d="M0 0h7L3.500 4z" fill="#505050" /></svg>
            </VScroll>
            <HScroll>
              <svg width="4" height="7" viewBox="0 0 4 7"><path d="M4 0v7L0 3.500z" fill="#a3a3a3" /></svg>
              <svg width="4" height="7" viewBox="0 0 4 7"><path d="M0 0v7l4-3.500z" fill="#a3a3a3" /></svg>
            </HScroll>
            <Corner />
          </Viewport>
        </Browser>
      </Workspace>
    </Desktop>
  );
}
